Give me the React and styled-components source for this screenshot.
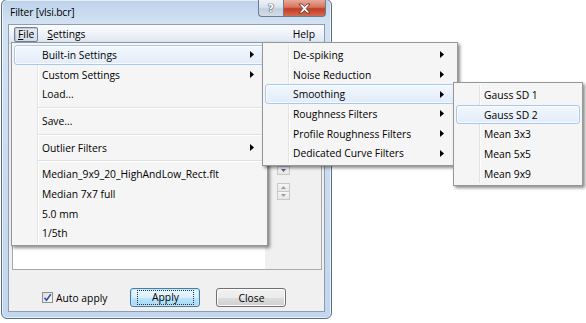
import React from "react";
import styled, { createGlobalStyle, css } from "styled-components";

const GlobalStyle = createGlobalStyle`
  html, body { margin: 0; padding: 0; background: #ffffff; }
  body { font-family: "Open Sans", "Noto Sans", sans-serif; font-size: 10.3px; color: #000; }
`;

const Screen = styled.div`
  position: relative;
  width: 586px;
  height: 323px;
  overflow: hidden;
  background: #fff;
`;

// fenêtre principale (cadre Aero)
const Window = styled.div`
  box-sizing: border-box;
  width: 331px;
  height: 320px;
  margin: -1px 0 0 1px;
  display: flex;
  flex-direction: column;
  padding: 0 6px 6px 6px;
  border: 1px solid #5d6d82;
  border-radius: 6px;
  background: linear-gradient(180deg, #bdd2eb 0px, #d3e2f3 24px, #cadbef 60%, #c2d6ee 100%);
  box-shadow: inset 0 0 0 1px rgba(255, 255, 255, 0.6);
`;

const TitleBar = styled.div`
  height: 24px;
  display: flex;
  justify-content: space-between;
  align-items: flex-start;
`;

const Caption = styled.div`
  padding: 5px 0 0 2px;
  letter-spacing: -0.15px;
`;

const CaptionButtons = styled.div`
  display: flex;
  margin-right: -1px;
`;

const CapButton = styled.div`
  box-sizing: border-box;
  height: 17px;
  display: flex;
  align-items: center;
  justify-content: center;
  border: 1px solid #6c7b8f;
  border-top: none;
  ${(p) =>
    p.$close
      ? css`
          width: 43px;
          border-radius: 0 0 4px 0;
          background: linear-gradient(180deg, #e9a99b 0%, #d7745f 45%, #c23b22 55%, #d46b4f 100%);
        `
      : css`
          width: 25px;
          border-right: none;
          border-radius: 0 0 0 4px;
          background: linear-gradient(180deg, #eef2f7 0%, #d9e2ec 45%, #c3cfdd 55%, #d3dde8 100%);
        `}
`;

const HelpGlyph = styled.span`
  font-family: "DejaVu Sans", sans-serif;
  font-weight: bold;
  font-size: 11px;
  color: #fff;
  text-shadow: 0 0 1px #445, 0 0 1px #445, 0 0 1px #445;
`;

const Client = styled.div`
  flex: 1;
  display: flex;
  flex-direction: column;
  background: #f0f0f0;
  border: 1px solid #8c9db3;
`;

const MenuBar = styled.div`
  height: 18px;
  display: flex;
  align-items: center;
  padding: 0 5px 0 5px;
  background: linear-gradient(180deg, #fbfcfe 0%, #eef2f8 50%, #dce5f1 100%);
  border-bottom: 1px solid #d5dfec;
`;

const BarItem = styled.div`
  box-sizing: border-box;
  height: 15px;
  display: flex;
  align-items: center;
  padding: 0 3px;
  margin-right: 5px;
  border: 1px solid transparent;
  border-radius: 2px;
  ${(p) =>
    p.$pressed &&
    css`
      border-color: #6f8299;
      background: linear-gradient(180deg, #e8edf3, #d4dce7);
      box-shadow: inset 1px 1px 1px rgba(0, 0, 0, 0.15);
    `}
  ${(p) => p.$right && css`margin-left: auto; margin-right: 0;`}
`;

const Body = styled.div`
  flex: 1;
  display: flex;
  padding: 3px 2px 0 3px;
`;

const Panel = styled.div`
  flex: 1;
  display: flex;
  border: 1px solid #a9a9a9;
  border-top-color: #d0d0d0;
`;

const ListArea = styled.div`
  flex: 1;
  background: #fff;
`;

const SideColumn = styled.div`
  width: 56px;
  display: flex;
  flex-direction: column;
  gap: 8px;
  padding-top: 110px;
`;

const SpinRow = styled.div`
  display: flex;
  height: 17px;
`;

const Field = styled.div`
  width: 2px;
  background: #fff;
  border: 1px solid #abadb3;
  border-left: none;
  border-radius: 0 2px 2px 0;
`;

const SpinGroup = styled.div`
  margin-left: 9px;
  width: 13px;
  display: flex;
  flex-direction: column;
`;

const SpinButton = styled.div`
  flex: 1;
  display: flex;
  align-items: center;
  justify-content: center;
  border: 1px solid #c8c8c8;
  background: linear-gradient(180deg, #f7f7f7, #e6e6e6);
  & + & { border-top: none; }
`;

const Footer = styled.div`
  height: 41px;
  display: flex;
  align-items: flex-start;
  padding: 18px 0 0 33px;
  box-sizing: border-box;
`;

const CheckLabel = styled.label`
  display: flex;
  align-items: center;
  gap: 3px;
  height: 19px;
  margin-right: 23px;
`;

const CheckBox = styled.span`
  box-sizing: border-box;
  width: 11px;
  height: 11px;
  display: flex;
  align-items: center;
  justify-content: center;
  border: 1px solid #8e8f8f;
  background: linear-gradient(135deg, #dcdcdc, #fbfbfb);
`;

const Button = styled.div`
  box-sizing: border-box;
  width: 70px;
  height: 19px;
  display: flex;
  align-items: center;
  justify-content: center;
  border-radius: 3px;
  margin-right: 16px;
  ${(p) =>
    p.$default
      ? css`
          border: 1px solid #3c7fb1;
          background: linear-gradient(180deg, #eaf6fd 0%, #d9f0fc 50%, #bee6fd 51%, #a7d9f5 100%);
          box-shadow: inset 0 0 0 1px #c5e4f7;
          & > span {
            outline: 1px dotted #333;
            outline-offset: 0px;
            padding: 0 14px;
            line-height: 13px;
          }
        `
      : css`
          border: 1px solid #707070;
          background: linear-gradient(180deg, #f2f2f2 0%, #ebebeb 50%, #dddddd 51%, #cfcfcf 100%);
          box-shadow: inset 0 0 0 1px #fcfcfc;
        `}
`;

// menus déroulants (par-dessus le contenu)
const Menu = styled.div`
  position: absolute;
  left: ${(p) => p.$left}px;
  top: ${(p) => p.$top}px;
  width: ${(p) => p.$width}px;
  box-sizing: border-box;
  padding: 2px;
  border: 1px solid #979797;
  background: #f5f5f5;
  box-shadow: 2px 2px 3px rgba(0, 0, 0, 0.45);
  &::before {
    content: "";
    position: absolute;
    left: 25px;
    top: 2px;
    bottom: 2px;
    width: 1px;
    background: #e2e3e3;
    box-shadow: 1px 0 0 #ffffff;
  }
`;

const Item = styled.div`
  position: relative;
  box-sizing: border-box;
  height: 19.7px;
  display: flex;
  align-items: center;
  padding: 0 10px 0 27px;
  border: 1px solid transparent;
  border-radius: 3px;
  white-space: nowrap;
  ${(p) =>
    p.$active &&
    css`
      border-color: #a9c8ee;
      background: linear-gradient(180deg, #f1f7fe 0%, #e2ecf9 100%);
      box-shadow: inset 0 0 0 1px rgba(255, 255, 255, 0.7);
    `}
`;

const ItemLabel = styled.span`
  flex: 1;
`;

const Separator = styled.div`
  height: 7px;
  position: relative;
  margin-left: 24px;
  &::after {
    content: "";
    position: absolute;
    left: 0;
    right: 0;
    top: 3px;
    height: 1px;
    background: #e0e0e0;
    box-shadow: 0 1px 0 #ffffff;
  }
`;

const Arrow = () => (
  <svg width="4" height="7" viewBox="0 0 4 7">
    <polygon points="0,0 4,3.5 0,7" fill="#000" />
  </svg>
);

const MenuEntry = ({ label, sub, active }) => (
  <Item $active={active}>
    <ItemLabel>{label}</ItemLabel>
    {sub && <Arrow />}
  </Item>
);

const fileMenu = [
  { label: "Built-in Settings", sub: true, active: true },
  { label: "Custom Settings", sub: true },
  { label: "Load..." },
  "-",
  { label: "Save..." },
  "-",
  { label: "Outlier Filters", sub: true },
  "-",
  { label: "Median_9x9_20_HighAndLow_Rect.flt" },
  { label: "Median 7x7 full" },
  { label: "5.0 mm" },
  { label: "1/5th" },
];

const builtinMenu = [
  { label: "De-spiking", sub: true },
  { label: "Noise Reduction", sub: true },
  { label: "Smoothing", sub: true, active: true },
  { label: "Roughness Filters", sub: true },
  { label: "Profile Roughness Filters", sub: true },
  { label: "Dedicated Curve Filters", sub: true },
];

const smoothingMenu = [
  { label: "Gauss SD 1" },
  { label: "Gauss SD 2", active: true },
  { label: "Mean 3x3" },
  { label: "Mean 5x5" },
  { label: "Mean 9x9" },
];

const renderItems = (items) =>
  items.map((it, i) =>
    it === "-" ? <Separator key={i} /> : <MenuEntry key={i} {...it} />
  );

const Spinner = ({ up = true }) => (
  <SpinGroup>
    <SpinButton>
      {up && (
        <svg width="5" height="3" viewBox="0 0 5 3">
          <polygon points="0,3 2.5,0 5,3" fill="#a0a0a0" />
        </svg>
      )}
    </SpinButton>
    <SpinButton>
      <svg width="5" height="3" viewBox="0 0 5 3">
        <polygon points="0,0 2.5,3 5,0" fill={up ? "#a0a0a0" : "#4a5f9a"} />
      </svg>
    </SpinButton>
  </SpinGroup>
);

export default function App() {
  return (
    <>
      <GlobalStyle />
      <Screen>
        <Window>
          <TitleBar>
            <Caption>Filter [vlsi.bcr]</Caption>
            <CaptionButtons>
              <CapButton>
                <HelpGlyph>?</HelpGlyph>
              </CapButton>
              <CapButton $close>
                <svg width="13" height="11" viewBox="0 0 13 11">
                  <path
                    d="M1 1 L4 1 L6.5 3.6 L9 1 L12 1 L8.2 5.5 L12 10 L9 10 L6.5 7.4 L4 10 L1 10 L4.8 5.5 Z"
                    fill="#ffffff"
                    stroke="#5a2a22"
                    strokeWidth="0.8"
                  />
                </svg>
              </CapButton>
            </CaptionButtons>
          </TitleBar>
          <Client>
            <MenuBar>
              <BarItem $pressed>
                <u>F</u>ile
              </BarItem>
              <BarItem>
                <u>S</u>ettings
              </BarItem>
              <BarItem $right>Help</BarItem>
            </MenuBar>
            <Body>
              <Panel>
                <ListArea />
                <SideColumn>
                  <SpinRow>
                    <Field style={{ visibility: "hidden" }} />
                    <Spinner up={false} />
                  </SpinRow>
                  <SpinRow>
                    <Field />
                    <Spinner />
                  </SpinRow>
                </SideColumn>
              </Panel>
            </Body>
            <Footer>
              <CheckLabel>
                <CheckBox>
                  <svg width="9" height="9" viewBox="0 0 9 9">
                    <path d="M1.5 4.8 L3.5 7.2 L7.8 1.2" fill="none" stroke="#2b4fa6" strokeWidth="1.5" />
                  </svg>
                </CheckBox>
                Auto apply
              </CheckLabel>
              <Button $default>
                <span>Apply</span>
              </Button>
              <Button>Close</Button>
            </Footer>
          </Client>
        </Window>

        <Menu $left={11} $top={42} $width={257}>
          {renderItems(fileMenu)}
        </Menu>
        <Menu $left={262} $top={42} $width={196}>
          {renderItems(builtinMenu)}
        </Menu>
        <Menu $left={453} $top={82} $width={130}>
          {renderItems(smoothingMenu)}
        </Menu>
      </Screen>
    </>
  );
}
